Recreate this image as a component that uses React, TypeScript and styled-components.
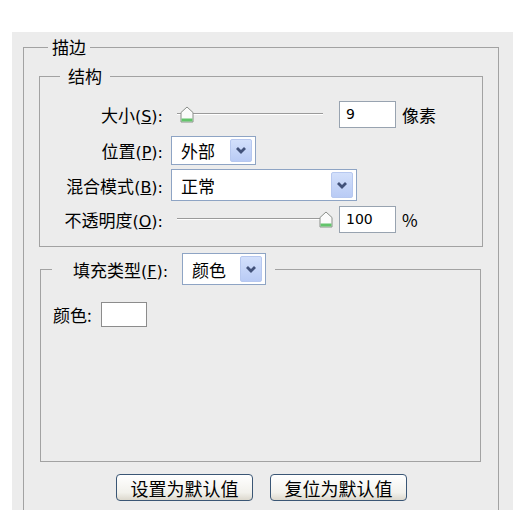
import React from 'react';
import styled, { createGlobalStyle } from 'styled-components';

const GlobalStyle = createGlobalStyle`
  body {
    margin: 0;
    background: #ffffff;
    font-family: 'Noto Sans CJK SC', 'Noto Sans', sans-serif;
    color: #000;
  }
`;

const Panel = styled.div`
  box-sizing: border-box;
  width: 501px;
  height: 478px;
  margin: 32px 0 0 12px;
  padding: 5px 14px 0 11px;
  background: #ececec;
  display: flex;
  flex-direction: column;
`;

const Group = styled.fieldset<{ $open?: boolean }>`
  margin: 0;
  padding: 0;
  min-width: 0;
  border: 1px solid #a2a2a2;
  border-bottom: ${(p) => (p.$open ? 'none' : '1px solid #a2a2a2')};
`;

const OuterGroup = styled(Group)`
  flex: 1;
  display: flex;
  flex-direction: column;
`;

const Legend = styled.legend<{ $left: number; $pad: number }>`
  margin-left: ${(p) => p.$left}px;
  padding: 0 ${(p) => p.$pad}px;
  font-size: 17px;
  line-height: 20px;
`;

const StructGroup = styled(Group)`
  margin: 9px 15px 0 15px;
  padding: 10px 0 10px 0;
`;

const Rows = styled.div`
  display: grid;
  grid-template-columns: 123px 1fr;
  grid-template-rows: 36px 36px 34px 34px;
  column-gap: 8px;
  align-items: center;
`;

const Label = styled.label`
  font-size: 17px;
  text-align: right;
  white-space: nowrap;
`;

const Key = styled.span`
  font-family: 'DejaVu Sans', sans-serif;
  font-size: 16px;
`;

const Control = styled.div`
  display: flex;
  align-items: center;
`;

const SliderBox = styled.div<{ $width: number }>`
  position: relative;
  width: ${(p) => p.$width}px;
  height: 20px;
  margin-left: 6px;
`;

const Track = styled.div`
  position: absolute;
  left: 0;
  right: 0;
  top: 9px;
  height: 1px;
  background: #9a9a9a;
  border-bottom: 1px solid #ffffff;
`;

const Thumb = styled.svg`
  position: absolute;
  top: 2px;
  margin-left: -7px;
`;

const NumberBox = styled.div<{ $gap: number }>`
  box-sizing: border-box;
  width: 57px;
  height: 27px;
  margin-left: ${(p) => p.$gap}px;
  border: 1px solid #98a3b0;
  background: #fff;
  font-family: 'DejaVu Sans', sans-serif;
  font-size: 14px;
  line-height: 25px;
  padding-left: 6px;
`;

const Unit = styled.span`
  margin-left: 6px;
  font-size: 17px;
`;

const Select = styled.div<{ $width: number; $height: number }>`
  box-sizing: border-box;
  width: ${(p) => p.$width}px;
  height: ${(p) => p.$height}px;
  border: 1px solid #8ea4c4;
  background: #fff;
  display: flex;
  align-items: center;
  justify-content: space-between;
  padding: 2px 3px 2px 9px;
  font-size: 17px;
`;

const DropButton = styled.div`
  box-sizing: border-box;
  width: 22px;
  height: 100%;
  border: 1px solid #b7c8ef;
  border-radius: 2px;
  background: linear-gradient(#d3e0fb, #b9cbf5);
  display: flex;
  align-items: center;
  justify-content: center;
`;

const FillGroup = styled(Group)`
  margin: 6px 17px 0 16px;
  padding: 0;
`;

const FillLegend = styled.legend`
  margin-left: 11px;
  padding: 0 9px 0 21px;
  display: flex;
  align-items: center;
  gap: 14px;
`;

const FillBody = styled.div`
  box-sizing: border-box;
  height: 176px;
  padding: 17px 12px 0 12px;
  display: flex;
  align-items: flex-start;
  gap: 9px;
`;

const ColorLabel = styled.span`
  font-size: 17px;
  line-height: 25px;
`;

const Swatch = styled.div`
  box-sizing: border-box;
  width: 46px;
  height: 25px;
  border: 1px solid #8c8c8c;
  background: #fff;
`;

const Buttons = styled.div`
  display: flex;
  justify-content: center;
  gap: 17px;
  margin-top: 12px;
  padding-left: 1px;
`;

const Button = styled.button`
  box-sizing: border-box;
  width: 137px;
  height: 27px;
  padding: 0;
  border: 1px solid #3a5675;
  border-radius: 4px;
  background: linear-gradient(#ffffff, #f2f1ec 70%, #dcd8cd);
  font-family: 'Noto Sans CJK SC', sans-serif;
  font-size: 18px;
  line-height: 24px;
  color: #000;
`;

const Chevron = () => (
  <svg width="12" height="9" viewBox="0 0 12 9">
    <path d="M2 2 L6 6 L10 2" fill="none" stroke="#42527a" strokeWidth="2.8" />
  </svg>
);

const Slider = ({ width, value }: { width: number; value: number }) => (
  <SliderBox $width={width}>
    <Track />
    <Thumb width="14" height="17" viewBox="0 0 14 17" style={{ left: `${(value / 100) * width}px` }}>
      <path d="M1 6.5 L7 1 L13 6.5 V16 H1 Z" fill="#fbfbfb" stroke="#8a8f8a" strokeWidth="1" />
      <rect x="1.5" y="12.5" width="11" height="3" fill="#63c46b" />
    </Thumb>
  </SliderBox>
);

const Dropdown = ({ text, width, height }: { text: string; width: number; height: number }) => (
  <Select $width={width} $height={height}>
    <span>{text}</span>
    <DropButton>
      <Chevron />
    </DropButton>
  </Select>
);

export default function App() {
  return (
    <>
      <GlobalStyle />
      <Panel>
        <OuterGroup $open>
          <Legend $left={24} $pad={4}>描边</Legend>
          <StructGroup>
            <Legend $left={20} $pad={8}>结构</Legend>
            <Rows>
              <Label>大小<Key>(<u>S</u>):</Key></Label>
              <Control>
                <Slider width={146} value={7} />
                <NumberBox $gap={16}>9</NumberBox>
                <Unit>像素</Unit>
              </Control>

              <Label>位置<Key>(<u>P</u>):</Key></Label>
              <Control>
                <Dropdown text="外部" width={85} height={29} />
              </Control>

              <Label>混合模式<Key>(<u>B</u>):</Key></Label>
              <Control>
                <Dropdown text="正常" width={186} height={32} />
              </Control>

              <Label>不透明度<Key>(<u>O</u>):</Key></Label>
              <Control>
                <Slider width={149} value={100} />
                <NumberBox $gap={13}>100</NumberBox>
                <Unit>%</Unit>
              </Control>
            </Rows>
          </StructGroup>

          <FillGroup>
            <FillLegend>
              <Label>填充类型<Key>(<u>F</u>):</Key></Label>
              <Dropdown text="颜色" width={84} height={32} />
            </FillLegend>
            <FillBody>
              <ColorLabel>颜色:</ColorLabel>
              <Swatch />
            </FillBody>
          </FillGroup>

          <Buttons>
            <Button>设置为默认值</Button>
            <Button>复位为默认值</Button>
          </Buttons>
        </OuterGroup>
      </Panel>
    </>
  );
}
